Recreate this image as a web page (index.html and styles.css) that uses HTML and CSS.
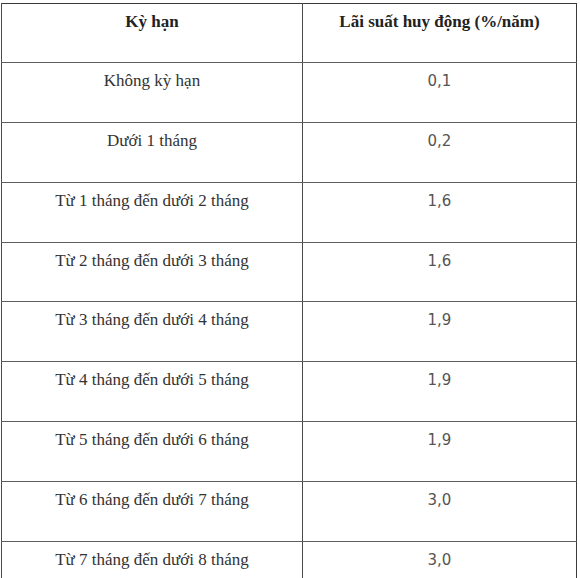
FILE: index.html
```html
<!DOCTYPE html>
<html lang="vi">
<head>
<meta charset="utf-8">
<link rel="stylesheet" href="styles.css">
</head>
<body>
<table class="rates">
  <colgroup><col class="c-term"><col class="c-rate"></colgroup>
  <thead>
    <tr><th>Kỳ hạn</th><th>Lãi suất huy động (%/năm)</th></tr>
  </thead>
  <tbody>
    <tr><td>Không kỳ hạn</td><td class="num">0,1</td></tr>
    <tr><td>Dưới 1 tháng</td><td class="num">0,2</td></tr>
    <tr><td>Từ 1 tháng đến dưới 2 tháng</td><td class="num">1,6</td></tr>
    <tr><td>Từ 2 tháng đến dưới 3 tháng</td><td class="num">1,6</td></tr>
    <tr><td>Từ 3 tháng đến dưới 4 tháng</td><td class="num">1,9</td></tr>
    <tr><td>Từ 4 tháng đến dưới 5 tháng</td><td class="num">1,9</td></tr>
    <tr><td>Từ 5 tháng đến dưới 6 tháng</td><td class="num">1,9</td></tr>
    <tr><td>Từ 6 tháng đến dưới 7 tháng</td><td class="num">3,0</td></tr>
    <tr><td>Từ 7 tháng đến dưới 8 tháng</td><td class="num">3,0</td></tr>
  </tbody>
</table>
</body>
</html>
```
FILE: styles.css
```css
html, body {
  margin: 0;
  padding: 0;
  background: #ffffff;
  overflow: hidden;
}
body {
  padding: 3px 0 0 1px;
  font-family: "Liberation Serif", "Times New Roman", serif;
  color: #333333;
}
.rates {
  border-collapse: collapse;
  width: 576px;
  table-layout: fixed;
  border-left: 1px solid #3a3a3a;
  border-right: 1px solid #3a3a3a;
  border-top: 1px solid #3a3a3a;
}
.c-term { width: 301px; }
.rates th,
.rates td {
  height: 59.85px;
  padding: 8px 4px 0;
  box-sizing: border-box;
  vertical-align: top;
  text-align: center;
  font-size: 17px;
  line-height: 19px;
  border-bottom: 1px solid #5e5e5e;
  border-left: 1px solid #4a4a4a;
}
.rates th {
  height: 59px;
  font-weight: bold;
  color: #222222;
}
.rates td.num {
  font-family: "DejaVu Sans", Verdana, sans-serif;
  font-size: 15px;
  color: #555555;
  padding-top: 9px;
}
```
